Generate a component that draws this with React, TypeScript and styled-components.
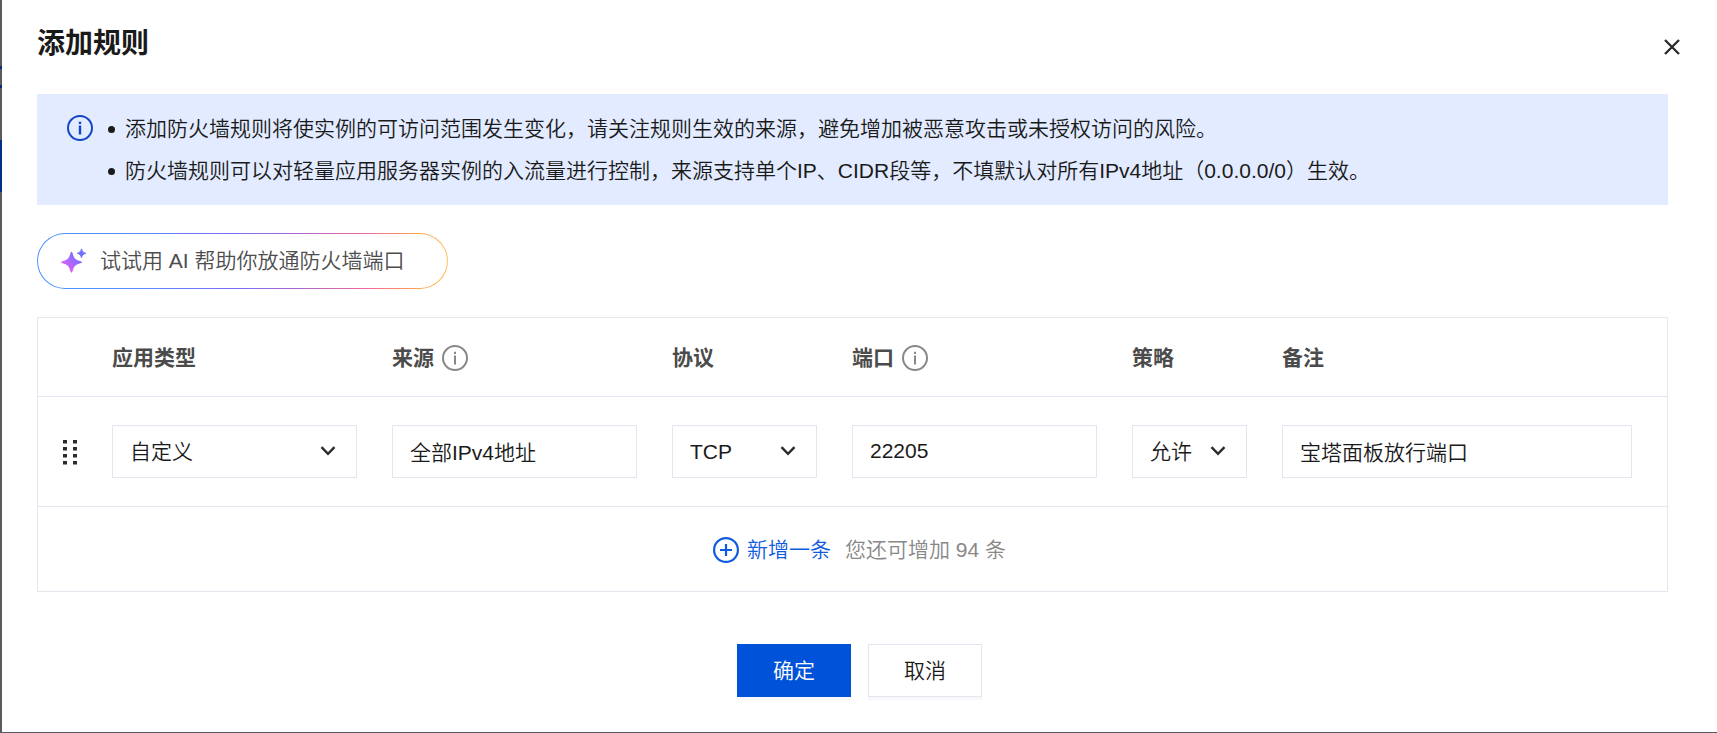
import React, { useState } from "react";
import styled, { createGlobalStyle } from "styled-components";

const GlobalStyle = createGlobalStyle`
  *, *::before, *::after { box-sizing: border-box; }
  body {
    margin: 0;
    background: #5b5b5d;
    color: #1a1a1a;
    font: 350 21px/32px "Liberation Sans", "Noto Sans CJK SC", sans-serif;
  }
  button, input, select { font: inherit; color: inherit; }
`;

const Backdrop = styled.div`
  min-height: 100vh;
  display: flex;
  padding: 0 0 1px 2px;
  background:
    linear-gradient(#00308a, #00308a) 0 140px / 2px 52px no-repeat,
    linear-gradient(#0a2a78, #0a2a78) 0 66px / 2px 3px no-repeat,
    linear-gradient(#0a2a78, #0a2a78) 0 85px / 2px 3px no-repeat,
    #5b5b5d;
`;

const Dialog = styled.section`
  flex: 1;
  min-width: 0;
  padding: 20px 49px 35px 35px;
  background: #fff;
`;

const DialogHeader = styled.header`
  display: flex;
  justify-content: space-between;
  height: 74px;
  margin-right: -16px;
`;

const Title = styled.h1`
  margin: 0;
  font-size: 28px;
  line-height: 48px;
  font-weight: 700;
`;

const CloseButton = styled.button`
  display: flex;
  align-items: center;
  justify-content: center;
  width: 24px;
  height: 54px;
  padding: 0;
  border: 0;
  background: none;
  cursor: pointer;
`;

const Notice = styled.div`
  display: flex;
  gap: 15px;
  padding: 14px 30px 13px;
  background: #e2ebff;
`;

const NoticeIcon = styled.span`
  display: flex;
  align-items: center;
  height: 40px;
  color: #1446c8;
`;

const NoticeList = styled.ul`
  margin: 0;
  padding: 0;
  list-style: none;
`;

const NoticeItem = styled.li`
  display: flex;
  align-items: center;
  gap: 10px;
  line-height: 42px;

  &::before {
    content: "";
    flex: none;
    width: 7px;
    height: 7px;
    border-radius: 50%;
    background: #1a1a1a;
  }
`;

const AiButton = styled.button`
  display: flex;
  align-items: center;
  gap: 13px;
  height: 56px;
  margin: 28px 0;
  padding: 0 42px 0 23px;
  border: 1px solid transparent;
  border-radius: 28px;
  color: #4d4d4d;
  background:
    linear-gradient(#fff, #fff) padding-box,
    linear-gradient(90deg, #4c94ff 0%, #5a8cff 25%, #7a6cf7 48%, #b565c8 66%, #f0699c 80%, #ffa44f 93%, #ffc261 100%) border-box;
  cursor: pointer;
`;

const TablePanel = styled.div`
  border: 1px solid #e5e7ee;
`;

const RuleTable = styled.table`
  width: 100%;
  table-layout: fixed;
  border-collapse: separate;
  border-spacing: 0;
`;

const Column = styled.col<{ $width?: number }>`
  width: ${(p) => (p.$width ? `${p.$width}px` : "auto")};
`;

const HeadCell = styled.th`
  height: 79px;
  padding: 2px 35px 0 0;
  border-bottom: 1px solid #e3e6f1;
  color: #4b4b4b;
  font-weight: 700;
  text-align: left;
`;

const HeadLabel = styled.span`
  display: flex;
  align-items: center;
  gap: 8px;
`;

const HelpButton = styled.button`
  display: flex;
  padding: 0;
  border: 0;
  background: none;
  color: #888;
  cursor: pointer;
`;

const Cell = styled.td`
  padding: 28px 35px 28px 0;
  border-bottom: 1px solid #e3e6f1;
`;

const DragHandle = styled.button`
  display: flex;
  margin: 0 0 0 24px;
  padding: 0;
  border: 0;
  background: none;
  cursor: grab;
`;

const TextField = styled.input`
  display: block;
  width: 100%;
  height: 53px;
  padding: 0 17px 2px;
  border: 1px solid #e3e6f0;
  border-radius: 0;
  background: #fff;
`;

const SelectBox = styled.div`
  display: grid;
  align-items: center;

  & > * { grid-area: 1 / 1; }
  & > svg {
    justify-self: end;
    margin: 0 21px 2px 0;
    pointer-events: none;
  }
`;

const Select = styled.select`
  width: 100%;
  height: 53px;
  padding: 0 17px;
  border: 1px solid #e3e6f0;
  border-radius: 0;
  background: #fff;
  appearance: none;
`;

const AddRow = styled.div`
  display: flex;
  align-items: center;
  justify-content: center;
  gap: 14px;
  height: 84px;
  padding: 2px 0 0 14px;
  color: #888;
`;

const AddButton = styled.button`
  display: flex;
  align-items: center;
  gap: 8px;
  padding: 0;
  border: 0;
  background: none;
  color: #0f5be0;
  cursor: pointer;
`;

const Actions = styled.footer`
  display: flex;
  justify-content: center;
  gap: 17px;
  margin-top: 52px;
  padding-left: 14px;
`;

const ActionButton = styled.button<{ $primary?: boolean }>`
  width: 114px;
  height: 53px;
  padding: 0;
  border: 1px solid ${(p) => (p.$primary ? "#0052d9" : "#e3e6f0")};
  background: ${(p) => (p.$primary ? "#0052d9" : "#fff")};
  color: ${(p) => (p.$primary ? "#fff" : "#1a1a1a")};
  box-shadow: 0 3px 1px rgba(30, 40, 90, 0.03);
  cursor: pointer;
`;

const InfoIcon = ({ bold }: { bold?: boolean }) => (
  <svg width="26" height="26" viewBox="0 0 26 26" fill="none" stroke="currentColor" strokeWidth="2" aria-hidden="true">
    <circle cx="13" cy="13" r="12" />
    <path d="M13 10.500v9M13 6.700v2.400" strokeWidth={bold ? 2.4 : 2} />
  </svg>
);

const PlusIcon = () => (
  <svg width="26" height="26" viewBox="0 0 26 26" fill="none" stroke="currentColor" strokeWidth="2.2" aria-hidden="true">
    <circle cx="13" cy="13" r="11.900" />
    <path d="M7 13h12M13 7v12" />
  </svg>
);

const CloseIcon = () => (
  <svg width="16" height="16" viewBox="0 0 16 16" fill="none" stroke="#2b2b2b" strokeWidth="2.300" aria-hidden="true">
    <path d="M1 1l14 14M15 1L1 15" />
  </svg>
);

const ChevronIcon = () => (
  <svg width="16" height="10" viewBox="0 0 16 10" fill="none" stroke="#2b2b2b" strokeWidth="2.4" aria-hidden="true">
    <path d="M1.500 1.200L8 7.800l6.500-6.600" />
  </svg>
);

const SparkIcon = () => (
  <svg width="26" height="26" viewBox="0 0 26 26" aria-hidden="true">
    <defs>
      <linearGradient id="sparkLarge" x1="0" y1="1" x2="1" y2="0">
        <stop offset="0.2" stopColor="#e05cf0" />
        <stop offset="0.5" stopColor="#a868ff" />
        <stop offset="0.9" stopColor="#6d6cff" />
      </linearGradient>
    </defs>
    <path
      d="M10.500 4.500c1.600 6.500 3.300 8.200 9.500 9.700-6.200 1.600-7.900 3.400-9.500 9.600-1.600-6.200-3.300-8-9.500-9.600 6.200-1.500 7.900-3.200 9.500-9.700z"
      fill="url(#sparkLarge)"
      stroke="url(#sparkLarge)"
      strokeWidth="1.600"
      strokeLinejoin="round"
    />
    <path
      d="M20.500 .8c.8 3 1.700 3.800 4.500 4.500-2.800.8-3.700 1.700-4.500 4.500-.8-2.800-1.700-3.700-4.500-4.500 2.800-.7 3.700-1.500 4.500-4.500z"
      fill="#7470ff"
      stroke="#7470ff"
      strokeWidth="0.800"
      strokeLinejoin="round"
    />
  </svg>
);

const GripIcon = () => (
  <svg width="16" height="26" viewBox="0 0 16 26" fill="#2b2b2b" aria-hidden="true">
    {[1, 8, 15, 22].map((y) => (
      <g key={y}>
        <rect x="1" y={y} width="4" height="3.500" />
        <rect x="11" y={y} width="4" height="3.500" />
      </g>
    ))}
  </svg>
);

type DropdownProps = { label: string; options: string[] };

const Dropdown = ({ label, options }: DropdownProps) => (
  <SelectBox>
    <Select aria-label={label} defaultValue={options[0]}>
      {options.map((option) => (
        <option key={option}>{option}</option>
      ))}
    </Select>
    <ChevronIcon />
  </SelectBox>
);

const columns = [
  { label: "应用类型", width: 280 },
  { label: "来源", width: 280, help: true },
  { label: "协议", width: 180 },
  { label: "端口", width: 280, help: true },
  { label: "策略", width: 150 },
  { label: "备注" },
];

export default function App() {
  const [rule, setRule] = useState({
    source: "全部IPv4地址",
    port: "22205",
    remark: "宝塔面板放行端口",
  });
  const bind = (key: keyof typeof rule) => ({
    value: rule[key],
    onChange: (e: React.ChangeEvent<HTMLInputElement>) => setRule({ ...rule, [key]: e.target.value }),
  });

  return (
    <>
      <GlobalStyle />
      <Backdrop>
        <Dialog role="dialog" aria-labelledby="dialog-title" lang="zh-CN">
          <DialogHeader>
            <Title id="dialog-title">添加规则</Title>
            <CloseButton aria-label="关闭"><CloseIcon /></CloseButton>
          </DialogHeader>

          <Notice>
            <NoticeIcon><InfoIcon bold /></NoticeIcon>
            <NoticeList>
              <NoticeItem>添加防火墙规则将使实例的可访问范围发生变化，请关注规则生效的来源，避免增加被恶意攻击或未授权访问的风险。</NoticeItem>
              <NoticeItem>防火墙规则可以对轻量应用服务器实例的入流量进行控制，来源支持单个IP、CIDR段等，不填默认对所有IPv4地址（0.0.0.0/0）生效。</NoticeItem>
            </NoticeList>
          </Notice>

          <AiButton><SparkIcon />试试用 AI 帮助你放通防火墙端口</AiButton>

          <TablePanel>
            <RuleTable>
              <colgroup>
                <Column $width={74} />
                {columns.map((c) => <Column key={c.label} $width={c.width} />)}
              </colgroup>
              <thead>
                <tr>
                  <HeadCell />
                  {columns.map((c) => (
                    <HeadCell key={c.label} scope="col">
                      <HeadLabel>
                        {c.label}
                        {c.help && <HelpButton aria-label={`${c.label}说明`}><InfoIcon /></HelpButton>}
                      </HeadLabel>
                    </HeadCell>
                  ))}
                </tr>
              </thead>
              <tbody>
                <tr>
                  <Cell><DragHandle aria-label="拖动排序"><GripIcon /></DragHandle></Cell>
                  <Cell><Dropdown label="应用类型" options={["自定义"]} /></Cell>
                  <Cell><TextField aria-label="来源" {...bind("source")} /></Cell>
                  <Cell><Dropdown label="协议" options={["TCP", "UDP"]} /></Cell>
                  <Cell><TextField aria-label="端口" {...bind("port")} /></Cell>
                  <Cell><Dropdown label="策略" options={["允许", "拒绝"]} /></Cell>
                  <Cell><TextField aria-label="备注" {...bind("remark")} /></Cell>
                </tr>
              </tbody>
            </RuleTable>
            <AddRow>
              <AddButton><PlusIcon />新增一条</AddButton>
              <span>您还可增加 94 条</span>
            </AddRow>
          </TablePanel>

          <Actions>
            <ActionButton $primary>确定</ActionButton>
            <ActionButton>取消</ActionButton>
          </Actions>
        </Dialog>
      </Backdrop>
    </>
  );
}
